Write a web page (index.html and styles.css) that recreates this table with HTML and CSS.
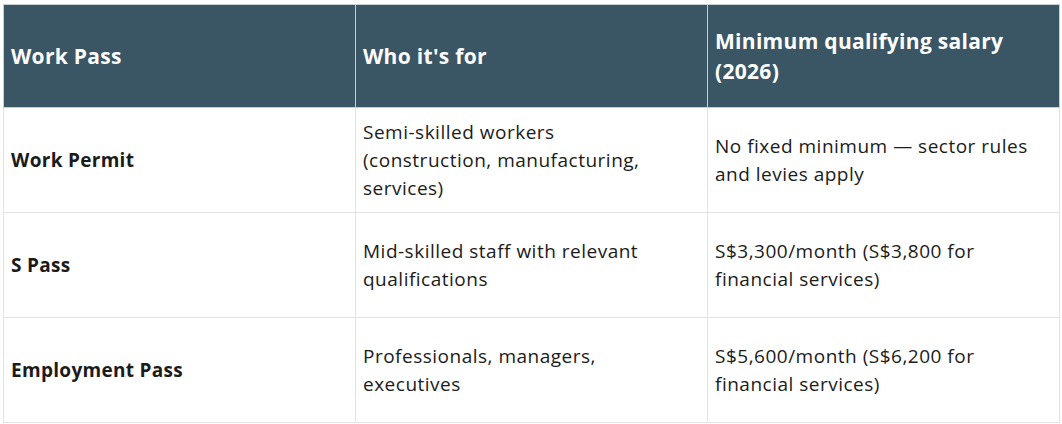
FILE: index.html
```html
<!DOCTYPE html>
<html>
<head>
<meta charset="utf-8">
<link rel="stylesheet" href="styles.css">
</head>
<body>
<div class="wrap">
<table class="passes">
  <colgroup><col class="c1"><col class="c2"><col class="c3"></colgroup>
  <thead>
    <tr><th>Work Pass</th><th>Who it's for</th><th>Minimum qualifying salary (2026)</th></tr>
  </thead>
  <tbody>
    <tr><td class="name">Work Permit</td><td>Semi-skilled workers (construction, manufacturing, services)</td><td>No fixed minimum — sector rules and levies apply</td></tr>
    <tr><td class="name">S Pass</td><td>Mid-skilled staff with relevant qualifications</td><td>S$3,300/month (S$3,800 for financial services)</td></tr>
    <tr><td class="name">Employment Pass</td><td>Professionals, managers, executives</td><td>S$5,600/month (S$6,200 for financial services)</td></tr>
  </tbody>
</table>
</div>
</body>
</html>
```
FILE: styles.css
```css
html, body { margin: 0; padding: 0; background: #fff; }
.wrap { padding: 4px 0 0 3px; }
.passes {
  border-collapse: collapse;
  table-layout: fixed;
  width: 1057px;
  font-family: "Open Sans", sans-serif;
  color: #1b1b1b;
}
.passes col { width: 352px; }
.passes th, .passes td {
  text-align: left;
  vertical-align: middle;
  padding: 0 26px 0 7px;
  border: 1px solid #e3e3e3;
}
.passes th {
  background: #3a5564;
  color: #fff;
  font-weight: 700;
  font-size: 21px;
  letter-spacing: 0.3px;
  line-height: 30px;
  height: 102px;
  border-color: #c9cfd2;
}
.passes td {
  font-size: 19px;
  letter-spacing: 0.5px;
  line-height: 28px;
  height: 104px;
}
.passes td.name { font-weight: 700; letter-spacing: 0.3px; }
```
